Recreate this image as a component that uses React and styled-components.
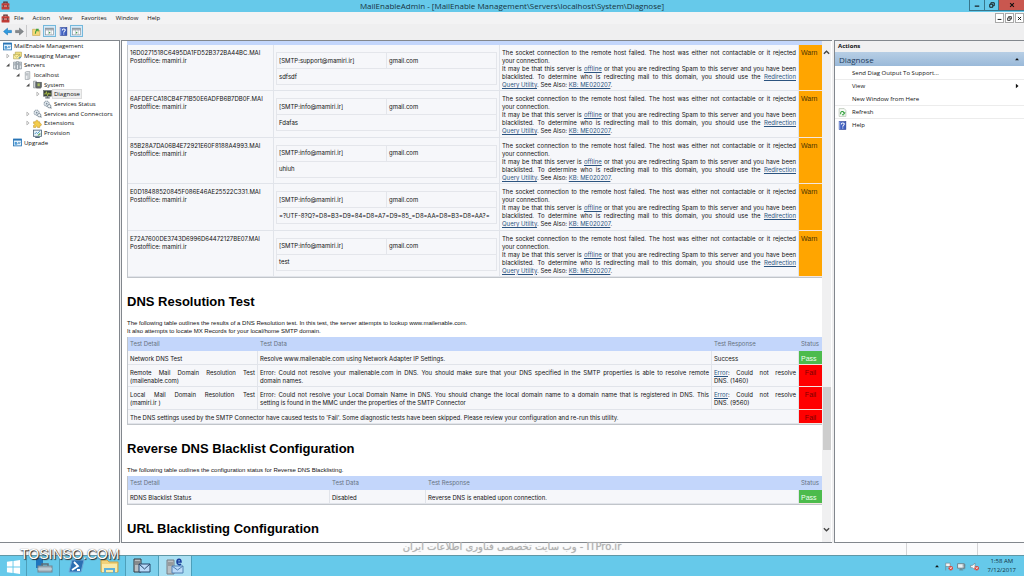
import React from "react";
import styled, { createGlobalStyle } from "styled-components";

const UI = '"Open Sans", "Noto Sans", sans-serif';
const DOC = '"Liberation Sans", Arial, sans-serif';
const CELL = 'Inter, "Liberation Sans", sans-serif';

const GlobalStyle = createGlobalStyle`
  *, *::before, *::after { box-sizing: border-box; }
  body { margin: 0; background: #efeff0; font-family: ${UI}; font-size: 6px; color: #111; }
  button { font: inherit; color: inherit; margin: 0; padding: 0; border: 0; background: none; }
  svg { display: block; flex: none; }
  h1, h2, p, ul { margin: 0; padding: 0; }
  ul { list-style: none; }
`;

const Screen = styled.div`
  position: relative;
  display: flex;
  flex-direction: column;
  height: 100vh;
  overflow: hidden;
`;

/* ---------- window chrome ---------- */

const TitleBar = styled.header`
  display: grid;
  grid-template-columns: 1fr auto 1fr;
  flex: none;
  height: 12px;
  background: #66c9ea;
`;

const TitleIcon = styled.div`
  padding: 1px;
`;

const TitleText = styled.h1`
  font-size: 8px;
  line-height: 12px;
  font-weight: 400;
  color: #17333d;
`;

const WindowButtons = styled.div`
  display: flex;
  justify-content: flex-end;
  height: 11px;
`;

const WindowButton = styled.button`
  display: grid;
  place-items: center;
  width: ${(p) => p.$width}px;
  background: ${(p) => (p.$close ? "#c9574f" : "#66c9ea")};
  border: solid #37768c;
  border-width: 0 0 1px 1px;
`;

const MenuBar = styled.nav`
  display: flex;
  align-items: center;
  flex: none;
  height: 12px;
  padding-left: 1px;
  gap: 4px;
  background: #f3f3f4;
`;

const MenuList = styled.div`
  display: flex;
  flex: 1;
  gap: 9px;
`;

const MenuItem = styled.button`
  line-height: 12px;
`;

const ChildButtons = styled.div`
  display: flex;
  gap: 1px;
`;

const ChildButton = styled.button`
  display: grid;
  place-items: center;
  width: 9px;
  height: 10px;
  background: #fff;
  border: 1px solid #a9a9a9;
`;

const ToolBar = styled.div`
  display: flex;
  align-items: center;
  flex: none;
  height: 16px;
  padding: 0 2px 2px;
  gap: 2px;
  background: #efeff0;
`;

const ToolButton = styled.button`
  display: grid;
  place-items: center;
  width: ${(p) => (p.$active ? 13 : 10)}px;
  height: 12px;
  background: ${(p) => (p.$active ? "#d6eaf8" : "transparent")};
  border: 1px solid ${(p) => (p.$active ? "#74b8dc" : "transparent")};
`;

const ToolDivider = styled.span`
  width: 1px;
  height: 12px;
  margin-right: 2px;
  background: #c9c9cb;
`;

/* ---------- panes ---------- */

const Panes = styled.div`
  display: flex;
  flex: 1;
  min-height: 0;
  gap: 1px;
`;

const TreePane = styled.aside`
  flex: none;
  width: 120px;
  background: #fff;
  border: solid #82878d;
  border-width: 1px 1px 1px 0;
`;

const TreeRow = styled.li`
  display: flex;
  align-items: center;
  height: ${(p) => (p.$tall ? 9 : 10)}px;
  padding-left: ${(p) => p.$level * 10 + 3}px;
  gap: 1px;
`;

const Twisty = styled.span`
  display: ${(p) => (p.$root ? "none" : "grid")};
  place-items: center;
  width: 9px;
  height: 8px;
`;

const TreeLabel = styled.span`
  padding: 0 1px;
  line-height: 8px;
  white-space: nowrap;
  background: ${(p) => (p.$selected ? "#efefef" : "transparent")};
  outline: 1px solid ${(p) => (p.$selected ? "#dcdcdc" : "transparent")};
`;

const DocumentPane = styled.main`
  display: flex;
  flex: 1;
  min-width: 0;
  margin-right: 1px;
  background: #fff;
  border: solid #82878d;
  border-width: 1px 0 1px 1px;
`;

const Page = styled.div`
  flex: 1;
  min-width: 0;
  padding-left: 5px;
  overflow: hidden;
  font-family: ${DOC};
  font-size: 6px;
  line-height: 8px;
  color: #111;
`;

const ScrollBar = styled.div`
  display: flex;
  flex-direction: column;
  flex: none;
  width: 9px;
  margin-right: 1px;
  padding: 6px 0 8px;
  background: #f0f0f1;
`;

const ScrollButton = styled.button`
  display: grid;
  place-items: center;
  height: 10px;
`;

const ScrollTrack = styled.div`
  display: flex;
  flex-direction: column;
  flex: 1;
  padding: 0 0 0 1px;
  &::before { content: ""; flex: 330; }
  &::after { content: ""; flex: 74; }
`;

const ScrollThumb = styled.div`
  flex: 63;
  background: #cdcdcd;
`;

/* ---------- report ---------- */

const HiddenHead = styled.div`
  height: 4px;
  background: #c3d6fb;
`;

const Heading = styled.h2`
  margin: 16px 0 9px;
  font-size: 13px;
  line-height: 16px;
  font-weight: 700;
  color: #000;
`;

const Note = styled.p`
  margin-bottom: 2px;
`;

const ReportTable = styled.table`
  width: 100%;
  height: ${(p) => p.$height}px;
  table-layout: fixed;
  border-collapse: separate;
  border-spacing: 0;
  font-family: ${CELL};
  background: #f6f7fa;
  border: solid #c1c5ca;
  border-width: 0 0 1px 1px;
`;

const HeadCell = styled.th`
  height: 14px;
  padding: 0 2px;
  font-weight: 400;
  text-align: left;
  color: #66727f;
  background: #c3d6fb;
`;

const Cell = styled.td`
  padding: 4px 2px 1px;
  vertical-align: top;
  border: solid #e1e4ea;
  border-width: 0 1px 1px 0;
`;

const statusColors = {
  Warn: ["#ffa500", "#4c3200"],
  Pass: ["#4cbb4c", "#f0fff0"],
  Fail: ["#ff0000", "#7d0000"],
};

const StatusCell = styled.td`
  padding: 4px 2px 1px;
  vertical-align: top;
  text-align: ${(p) => (p.$status === "Fail" ? "center" : "left")};
  font-family: ${DOC};
  font-size: 7px;
  color: ${(p) => statusColors[p.$status][1]};
  background: ${(p) => statusColors[p.$status][0]};
  border-bottom: 1px solid #f3e6e0;
`;

const Line = styled.span`
  display: block;
  white-space: nowrap;
  text-align: justify;
  text-align-last: ${(p) => (p.$fill ? "justify" : "left")};
`;

const DocLink = styled.a`
  color: #2c5480;
  text-decoration: underline;
`;

const MailTable = styled.table`
  width: 100%;
  height: 33px;
  margin-top: 3px;
  table-layout: fixed;
  border-collapse: collapse;
  td { padding: 0 2px; border: 1px solid #e4e6eb; white-space: nowrap; }
`;

/* ---------- actions ---------- */

const ActionsPane = styled.aside`
  flex: none;
  width: 190px;
  background: #fff;
  border: solid #82878d;
  border-width: 1px 0 1px 1px;
`;

const ActionsTitle = styled.h2`
  padding-left: 3px;
  font-size: 6px;
  line-height: 11px;
  font-weight: 700;
  background: #f0f0f1;
`;

const ActionsGroup = styled.button`
  display: flex;
  align-items: center;
  justify-content: space-between;
  width: 100%;
  height: 14px;
  margin-bottom: 1px;
  padding: 0 4px;
  font-size: 8px;
  color: #1e3c5c;
  background: linear-gradient(#b7cee5, #9ab9d9);
`;

const ActionItem = styled.button`
  display: grid;
  grid-template-columns: 14px 1fr auto;
  align-items: center;
  width: 100%;
  height: 13px;
  padding: 0 4px 0 3px;
  text-align: left;
  border-bottom: 1px solid ${(p) => (p.$rule ? "#ececec" : "transparent")};
`;

/* ---------- bottom ---------- */

const StatusBar = styled.footer`
  display: flex;
  justify-content: flex-end;
  flex: none;
  height: 12px;
  background: #fbfbfc;
`;

const StatusPart = styled.span`
  width: ${(p) => p.$width}px;
  border-left: 1px solid #d4d4d6;
`;

const TaskBar = styled.footer`
  display: flex;
  flex: none;
  height: 21px;
  background: #66c9ea;
  border-top: 1px solid #5f97a6;
`;

const TaskButton = styled.button`
  display: grid;
  place-items: center;
  width: ${(p) => (p.$start ? 27 : 33)}px;
  background: ${(p) => (p.$active ? "#a9dff2" : p.$open ? "#7dd0ec" : "transparent")};
  border-right: 1px solid ${(p) => (p.$edge ? "#4d9fba" : "transparent")};
`;

const Tray = styled.div`
  display: flex;
  align-items: center;
  gap: 4px;
  margin-left: auto;
  padding-right: 8px;
`;

const Clock = styled.time`
  padding-left: 5px;
  line-height: 9px;
  text-align: center;
  color: #12323e;
`;

const CornerMark = styled.div`
  position: absolute;
  left: 20px;
  bottom: 14px;
  font: 14px/16px ${DOC};
  color: #fff;
  text-shadow: 1px 1px 1px #222, 0 0 1px #444;
`;

const CenterMark = styled.div`
  position: absolute;
  left: 0;
  right: 0;
  bottom: 22px;
  text-align: center;
  font: 400 10px/14px "DejaVu Sans", sans-serif;
  color: #b0b0b0;
  text-shadow: 0 0 1px #c8c8c8;
`;

/* ---------- drawings ---------- */

const Svg = ({ s = 9, children }) => (
  <svg width={s} height={s} viewBox="0 0 16 16" aria-hidden="true">{children}</svg>
);

const icons = {
  toolbox: (
    <>
      <path d="M5 5V2h6v3" fill="none" stroke="#5a2b2b" strokeWidth="2" />
      <rect x="1" y="4" width="14" height="11" rx="1" fill="#c23b35" />
      <path d="M1 9h14" stroke="#f3c9c4" strokeWidth="1.5" />
      <path d="M4 7v4M12 7v4" stroke="#51464a" strokeWidth="2" />
    </>
  ),
  console: (
    <>
      <rect x="1" y="2" width="14" height="12" fill="#e4f2fc" stroke="#2874b5" strokeWidth="1.5" />
      <path d="M1 3h14" stroke="#2874b5" strokeWidth="3" />
      <path d="M3 7h4v5H3z" fill="#4d9ad6" />
      <path d="M8 11l2-3 1 2 2-3" fill="none" stroke="#2874b5" strokeWidth="1.3" />
    </>
  ),
  mail: (
    <>
      <path d="M4 2h11v8H4z" fill="#f5e480" stroke="#a79a45" />
      <path d="M1 6h11v8H1z" fill="#fbf0a0" stroke="#a79a45" />
      <path d="M1 6l5.500 5L12 6" fill="none" stroke="#a79a45" />
      <path d="M10 13l4-2" stroke="#4f8fbf" strokeWidth="2" />
    </>
  ),
  servers: (
    <>
      <path d="M1 2h4v12H1zM6 1h4v14H6zM11 2h4v12h-4z" fill="#e6eaee" stroke="#66727e" />
      <path d="M2 5h2M7 4h2M12 5h2M2 7h2M7 6h2M12 7h2" stroke="#66727e" />
    </>
  ),
  server: (
    <>
      <path d="M4 2l3-1h5v13l-3 1H4z" fill="#eef0f2" stroke="#818991" />
      <path d="M9 3v12M5 5h3M5 7h3" stroke="#818991" />
    </>
  ),
  system: (
    <>
      <path d="M1 2h5v12H1z" fill="#d5dadd" stroke="#737b81" />
      <rect x="5" y="4" width="10" height="9" fill="#62696b" stroke="#454b4d" />
      <path d="M8 6h4v5H8z" fill="#a9bd5d" />
      <path d="M6 14h8" stroke="#555" strokeWidth="2" />
    </>
  ),
  diagnose: (
    <>
      <rect x="1" y="1" width="14" height="10" fill="#39423a" stroke="#5d6668" />
      <path d="M2 7h3l1-4 2 7 2-5 1 2h3" fill="none" stroke="#b6cb43" strokeWidth="1.5" />
      <path d="M4 14h8M8 11v3" stroke="#656d70" strokeWidth="2" />
    </>
  ),
  gear: (
    <>
      <circle cx="6.500" cy="6.500" r="4.500" fill="#e2e9ef" stroke="#8e9ba7" strokeWidth="2" strokeDasharray="2 1" />
      <circle cx="6.500" cy="6.500" r="1.500" fill="#7b8c9a" />
      <circle cx="11" cy="11" r="3" fill="#eef3f6" stroke="#7b8a96" strokeWidth="1.500" />
      <path d="M13 13l2 2" stroke="#66747f" strokeWidth="2" />
    </>
  ),
  puzzle: (
    <path d="M1 5h4c-1-4 5-4 4 0h3v3c4-1 4 5 0 4v3H8c1-3-4-3-3 0H1v-4c3 0 3-3 0-3z" fill="#f3cd4b" stroke="#c1932a" />
  ),
  provision: (
    <>
      <rect x="1" y="2" width="14" height="11" fill="#e8f1f8" stroke="#50677b" strokeWidth="1.500" />
      <path d="M4 15h8" stroke="#50677b" strokeWidth="2" />
      <path d="M3 9l3-3 2 2 4-4" fill="none" stroke="#2f8cbd" strokeWidth="1.500" />
      <path d="M8 11l4-4 2 2-4 3z" fill="#62a65a" />
    </>
  ),
  back: <path d="M1 8l7-6v4h7v4H8v4z" fill="#2f9be0" stroke="#1873b5" />,
  forward: <path d="M15 8L8 2v4H1v4h7v4z" fill="#85898d" stroke="#686c70" />,
  up: (
    <>
      <path d="M1 4h5l1 2h7v9H1z" fill="#f5d978" stroke="#c3a044" />
      <path d="M6 12c0-4 1-6 4-7M7 4l4 0 0 4" fill="none" stroke="#42a03e" strokeWidth="1.800" />
    </>
  ),
  panel: (
    <>
      <rect x="1" y="2" width="14" height="12" fill="#fff" stroke="#7c858e" />
      <path d="M1 3h14M1 5h14" stroke="#7c858e" strokeWidth="1.500" />
      <path d="M6 5v9M11 5v9" stroke="#9fa7af" />
      <path d="M7 8l3 2-3 2z" fill="#3b9a46" />
    </>
  ),
  help: (
    <>
      <rect x="2" y="1" width="12" height="14" fill="#3f5fbf" stroke="#24398c" />
      <path d="M3 1v14" stroke="#8fa5e3" strokeWidth="2" />
      <path d="M6 6c0-4 6-3 5 0-.500 1.500-2.500 1.500-2.500 4M8.500 11.500v2" fill="none" stroke="#fff" strokeWidth="1.800" />
    </>
  ),
  refresh: (
    <>
      <path d="M2 1h9l3 3v11H2z" fill="#f5faf4" stroke="#a3b3a1" />
      <path d="M5 11c-2-5 5-7 6-2M9 8l2 2 2-2M7 12h4" fill="none" stroke="#2f9e39" strokeWidth="1.800" />
    </>
  ),
  collapse: <path d="M3 11l5-6 5 6z" fill="#111" />,
  expand: <path d="M5 2l7 6-7 6z" fill="#111" />,
  open: <path d="M12 3v9H3z" fill="#4a4a4a" />,
  closed: <path d="M5 3l6 5-6 5z" fill="#fff" stroke="#8b8b8b" strokeWidth="1.500" />,
  scrollUp: <path d="M2 11l6-6 6 6" fill="none" stroke="#444" strokeWidth="3" />,
  scrollDown: <path d="M2 5l6 6 6-6" fill="none" stroke="#444" strokeWidth="3" />,
  min: <path d="M2 11h12" stroke="#111" strokeWidth="3" />,
  restore: <path d="M5 5V2h9v8h-3M2 6h8v8H2z" fill="none" stroke="#111" strokeWidth="2.500" />,
  close: <path d="M3 3l10 10M13 3L3 13" stroke="#111" strokeWidth="3" />,
};

const trayBadge = (
  <>
    <circle cx="12" cy="11" r="4" fill="#d8473c" />
    <path d="M10 9l4 4M14 9l-4 4" stroke="#fff" strokeWidth="1.200" />
  </>
);

const task = {
  start: (
    <svg width="15" height="15" viewBox="0 0 16 16">
      <path d="M1 3l6-1v6H1zM8 2l7-1v7H8zM1 9h6v6l-6-1zM8 9h7v7l-7-1z" fill="#fff" />
    </svg>
  ),
  manager: (
    <svg width="19" height="16" viewBox="0 0 19 16">
      <path d="M2 0h7v10H2z" fill="#1f75bd" />
      <path d="M8 8V6h6v2" fill="none" stroke="#5d6b75" strokeWidth="1.500" />
      <rect x="4" y="8" width="14" height="6" fill="#a9b8c2" stroke="#74838d" />
      <path d="M4 11h14" stroke="#d5dee3" />
    </svg>
  ),
  shell: (
    <svg width="18" height="16" viewBox="0 0 18 16">
      <path d="M5 2h12l-3 12H2z" fill="#2c6fb2" stroke="#6ea6d6" />
      <path d="M7 4l4 4-6 4M10 12h3" fill="none" stroke="#fff" strokeWidth="1.800" />
    </svg>
  ),
  folder: (
    <svg width="19" height="16" viewBox="0 0 19 16">
      <path d="M1 2h6l2 2h9v10H1z" fill="#f1d27a" stroke="#c8a44c" />
      <path d="M2 6h15v8H2z" fill="#faeaa9" />
      <path d="M5 15v-4h9v4" fill="none" stroke="#5fb1da" strokeWidth="2" />
    </svg>
  ),
  mail: (
    <svg width="18" height="16" viewBox="0 0 18 16">
      <path d="M1 1h7v13H1z" fill="#b9bfc3" stroke="#33393e" />
      <path d="M2 4h5M2 6h5" stroke="#555" />
      <path d="M6 6h11v8H6z" fill="#b9d9f8" stroke="#28476b" />
      <path d="M6 6l5.500 5L17 6" fill="none" stroke="#28476b" />
    </svg>
  ),
  admin: (
    <svg width="18" height="17" viewBox="0 0 18 17">
      <path d="M1 2h7v14H1z" fill="#b9bfc3" stroke="#777f85" />
      <path d="M2 5h5M2 7h5" stroke="#777" />
      <path d="M6 8h11v7H6z" fill="#b9d9f8" stroke="#5382b4" />
      <path d="M6 8l5.500 4L17 8" fill="none" stroke="#5382b4" />
      <path d="M11 4h4c0-4-4-3-4 0 0 3 3 3 4 2" fill="none" stroke="#1b3f9e" strokeWidth="1.600" />
    </svg>
  ),
};

/* ---------- data ---------- */

const tree = [
  [0, "root", "console", "MailEnable Management"],
  [0, "closed", "mail", "Messaging Manager"],
  [0, "open", "servers", "Servers"],
  [1, "open", "server", "localhost"],
  [2, "open", "system", "System"],
  [3, "closed", "diagnose", "Diagnose"],
  [3, "", "gear", "Services Status"],
  [2, "closed", "gear", "Services and Connectors"],
  [2, "closed", "puzzle", "Extensions"],
  [2, "", "provision", "Provision"],
  [0, "", "console", "Upgrade"],
];

const messages = [
  ["16D0271518C6495DA1FD52B372BA44BC.MAI", "[SMTP:support@mamiri.ir]", "sdfsdf"],
  ["6AFDEFCA18CB4F71B50E6ADFB6B7DB0F.MAI", "[SMTP:info@mamiri.ir]", "Fdafas"],
  ["85B28A7DA06B4E72921E60F8188A4993.MAI", "[SMTP:info@mamiri.ir]", "uhiuh"],
  ["E0D18488520845F086E46AE25522C331.MAI", "[SMTP:info@mamiri.ir]", "=?UTF-8?Q?=D8=B3=D9=84=D8=A7=D9=85_=D8=AA=D8=B3=D8=AA?="],
  ["E72A7600DE3743D6996D64472127BE07.MAI", "[SMTP:info@mamiri.ir]", "test"],
];

const actions = [
  ["Send Diag Output To Support...", null, true],
  ["View", null, false, true],
  ["New Window from Here", null, true],
  ["Refresh", "refresh", true],
  ["Help", "help", false],
];

function MessageRow({ id, from, subject }) {
  return (
    <tr>
      <Cell>
        <Line>{id}</Line>
        <Line>Postoffice: mamiri.ir</Line>
      </Cell>
      <Cell>
        <MailTable>
          <tbody>
            <tr><td>{from}</td><td>gmail.com</td></tr>
            <tr><td colSpan={2}>{subject}</td></tr>
          </tbody>
        </MailTable>
      </Cell>
      <Cell>
        <Line $fill>The socket connection to the remote host failed. The host was either not contactable or it rejected</Line>
        <Line>your connection.</Line>
        <Line $fill>It may be that this server is <DocLink href="#offline">offline</DocLink> or that you are redirecting Spam to this server and you have been</Line>
        <Line $fill>blacklisted. To determine who is redirecting mail to this domain, you should use the <DocLink href="#utility">Redirection</DocLink></Line>
        <Line><DocLink href="#utility">Query Utility</DocLink>. See Also: <DocLink href="#kb">KB: ME020207</DocLink>.</Line>
      </Cell>
      <StatusCell $status="Warn">Warn</StatusCell>
    </tr>
  );
}

export default function App() {
  return (
    <Screen>
      <GlobalStyle />
      <TitleBar>
        <TitleIcon><Svg>{icons.toolbox}</Svg></TitleIcon>
        <TitleText>MailEnableAdmin - [MailEnable Management\Servers\localhost\System\Diagnose]</TitleText>
        <WindowButtons>
          <WindowButton $width={15} aria-label="Minimize"><Svg s={6}>{icons.min}</Svg></WindowButton>
          <WindowButton $width={14} aria-label="Restore"><Svg s={6}>{icons.restore}</Svg></WindowButton>
          <WindowButton $width={26} $close aria-label="Close"><Svg s={6}>{icons.close}</Svg></WindowButton>
        </WindowButtons>
      </TitleBar>

      <MenuBar>
        <Svg>{icons.toolbox}</Svg>
        <MenuList>
          {["File", "Action", "View", "Favorites", "Window", "Help"].map((m) => <MenuItem key={m}>{m}</MenuItem>)}
        </MenuList>
        <ChildButtons>
          <ChildButton aria-label="Minimize child"><Svg s={5}>{icons.min}</Svg></ChildButton>
          <ChildButton aria-label="Restore child"><Svg s={5}>{icons.restore}</Svg></ChildButton>
          <ChildButton aria-label="Close child"><Svg s={5}>{icons.close}</Svg></ChildButton>
        </ChildButtons>
      </MenuBar>

      <ToolBar>
        <ToolButton aria-label="Back"><Svg>{icons.back}</Svg></ToolButton>
        <ToolButton aria-label="Forward"><Svg>{icons.forward}</Svg></ToolButton>
        <ToolDivider />
        <ToolButton aria-label="Up"><Svg>{icons.up}</Svg></ToolButton>
        <ToolButton $active aria-label="Console tree"><Svg>{icons.panel}</Svg></ToolButton>
        <ToolButton aria-label="Help topics"><Svg>{icons.help}</Svg></ToolButton>
        <ToolButton $active aria-label="Action pane"><Svg>{icons.panel}</Svg></ToolButton>
      </ToolBar>

      <Panes>
        <TreePane>
          <ul>
            {tree.map(([level, state, icon, label], i) => (
              <TreeRow key={label} $level={level} $tall={i % 3 === 1}>
                <Twisty $root={state === "root"}>
                  {icons[state] && <Svg s={6}>{icons[state]}</Svg>}
                </Twisty>
                <Svg>{icons[icon]}</Svg>
                <TreeLabel $selected={label === "Diagnose"}>{label}</TreeLabel>
              </TreeRow>
            ))}
          </ul>
        </TreePane>

        <DocumentPane>
          <Page>
            <HiddenHead />
            <ReportTable $height={233}>
              <colgroup><col width="146" /><col width="226" /><col /><col width="23" /></colgroup>
              <tbody>
                {messages.map(([id, from, subject]) => <MessageRow key={id} id={id} from={from} subject={subject} />)}
              </tbody>
            </ReportTable>

            <Heading>DNS Resolution Test</Heading>
            <Note>
              The following table outlines the results of a DNS Resolution test. In this test, the server attempts to lookup www.mailenable.com.<br />
              It also attempts to locate MX Records for your local/home SMTP domain.
            </Note>
            <ReportTable $height={88}>
              <colgroup><col width="130" /><col /><col width="87" /><col width="23" /></colgroup>
              <thead>
                <tr><HeadCell>Test Detail</HeadCell><HeadCell>Test Data</HeadCell><HeadCell>Test Response</HeadCell><HeadCell>Status</HeadCell></tr>
              </thead>
              <tbody>
                <tr>
                  <Cell>Network DNS Test</Cell>
                  <Cell>Resolve www.mailenable.com using Network Adapter IP Settings.</Cell>
                  <Cell>Success</Cell>
                  <StatusCell $status="Pass">Pass</StatusCell>
                </tr>
                <tr>
                  <Cell><Line $fill>Remote Mail Domain Resolution Test</Line><Line>(mailenable.com)</Line></Cell>
                  <Cell>
                    <Line $fill>Error: Could not resolve your mailenable.com in DNS. You should make sure that your DNS specified in the SMTP properties is able to resolve remote</Line>
                    <Line>domain names.</Line>
                  </Cell>
                  <Cell><Line $fill><DocLink href="#1460">Error</DocLink>: Could not resolve</Line><Line>DNS. (1460)</Line></Cell>
                  <StatusCell $status="Fail">Fail</StatusCell>
                </tr>
                <tr>
                  <Cell><Line $fill>Local Mail Domain Resolution Test</Line><Line>(mamiri.ir )</Line></Cell>
                  <Cell>
                    <Line $fill>Error: Could not resolve your Local Domain Name in DNS. You should change the local domain name to a domain name that is registered in DNS. This</Line>
                    <Line>setting is found in the MMC under the properties of the SMTP Connector</Line>
                  </Cell>
                  <Cell><Line $fill><DocLink href="#9560">Error</DocLink>: Could not resolve</Line><Line>DNS. (9560)</Line></Cell>
                  <StatusCell $status="Fail">Fail</StatusCell>
                </tr>
                <tr>
                  <Cell colSpan={3}>The DNS settings used by the SMTP Connector have caused tests to 'Fail'. Some diagnostic tests have been skipped. Please review your configuration and re-run this utility.</Cell>
                  <StatusCell $status="Fail">Fail</StatusCell>
                </tr>
              </tbody>
            </ReportTable>

            <Heading>Reverse DNS Blacklist Configuration</Heading>
            <Note>The following table outlines the configuration status for Reverse DNS Blacklisting.</Note>
            <ReportTable $height={29}>
              <colgroup><col width="202" /><col width="96" /><col /><col width="23" /></colgroup>
              <thead>
                <tr><HeadCell>Test Detail</HeadCell><HeadCell>Test Data</HeadCell><HeadCell>Test Response</HeadCell><HeadCell>Status</HeadCell></tr>
              </thead>
              <tbody>
                <tr>
                  <Cell>RDNS Blacklist Status</Cell>
                  <Cell>Disabled</Cell>
                  <Cell>Reverse DNS is enabled upon connection.</Cell>
                  <StatusCell $status="Pass">Pass</StatusCell>
                </tr>
              </tbody>
            </ReportTable>

            <Heading>URL Blacklisting Configuration</Heading>
          </Page>
          <ScrollBar>
            <ScrollButton aria-label="Scroll up"><Svg s={7}>{icons.scrollUp}</Svg></ScrollButton>
            <ScrollTrack><ScrollThumb /></ScrollTrack>
            <ScrollButton aria-label="Scroll down"><Svg s={7}>{icons.scrollDown}</Svg></ScrollButton>
          </ScrollBar>
        </DocumentPane>

        <ActionsPane>
          <ActionsTitle>Actions</ActionsTitle>
          <ActionsGroup>Diagnose<Svg s={6}>{icons.collapse}</Svg></ActionsGroup>
          {actions.map(([label, icon, rule, more]) => (
            <ActionItem key={label} $rule={rule}>
              <span>{icon && <Svg>{icons[icon]}</Svg>}</span>
              <span>{label}</span>
              {more && <Svg s={6}>{icons.expand}</Svg>}
            </ActionItem>
          ))}
        </ActionsPane>
      </Panes>

      <StatusBar><StatusPart $width={71} /><StatusPart $width={47} /></StatusBar>

      <TaskBar>
        <TaskButton $start $edge aria-label="Start">{task.start}</TaskButton>
        <TaskButton $edge aria-label="Server Manager">{task.manager}</TaskButton>
        <TaskButton aria-label="PowerShell">{task.shell}</TaskButton>
        <TaskButton $edge aria-label="File Explorer">{task.folder}</TaskButton>
        <TaskButton $open $edge aria-label="Mail console">{task.mail}</TaskButton>
        <TaskButton $active $edge aria-label="MailEnable Admin">{task.admin}</TaskButton>
        <Tray>
          <Svg s={6}>{icons.collapse}</Svg>
          <Svg>
            <path d="M3 15V2h8v6H3" fill="#f5f5f5" stroke="#687880" />{trayBadge}
          </Svg>
          <Svg>
            <path d="M1 3h12v8H1zM4 14h7M7 11v3" fill="#e8f1f4" stroke="#687880" strokeWidth="1.500" />
            <path d="M11 5v6c0 2 3 2 3 0V5M10 5h5" fill="none" stroke="#687880" />
          </Svg>
          <Svg>
            <path d="M1 6h3l5-4v12l-5-4H1z" fill="#f5f5f5" stroke="#687880" />{trayBadge}
          </Svg>
          <Clock>1:58 AM<br />7/12/2017</Clock>
        </Tray>
      </TaskBar>

      <CornerMark>TOSINSO.COM</CornerMark>
      <CenterMark dir="rtl" lang="fa">ITPro.ir - وب سایت تخصصی فناوری اطلاعات ایران</CenterMark>
    </Screen>
  );
}
